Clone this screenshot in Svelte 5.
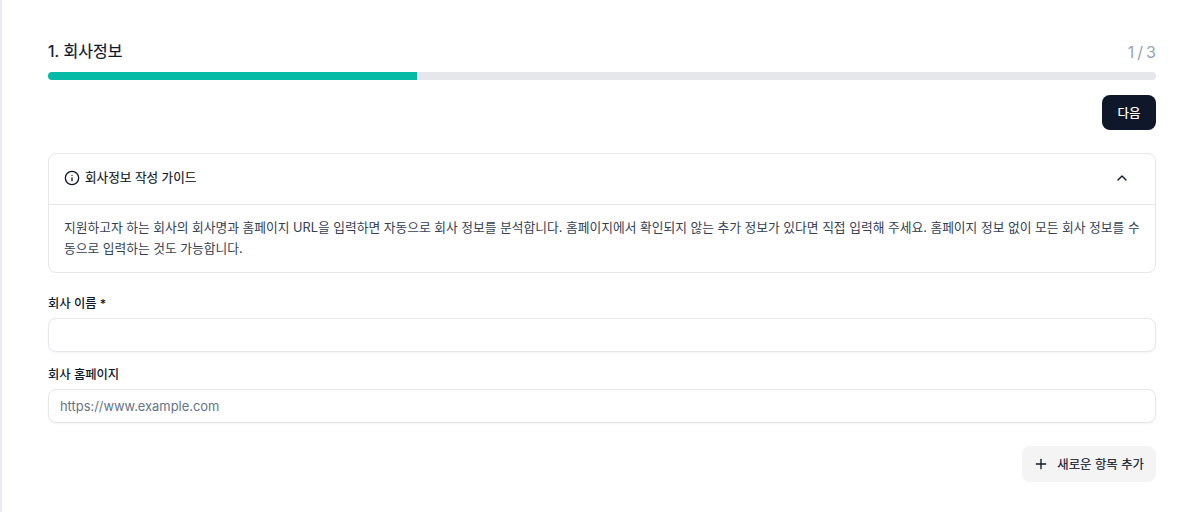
<script>
	let open = $state(true);
	let name = $state('');
	let homepage = $state('');
	const step = 1;
	const total = 3;
</script>

<div class="page">
	<main class="content">
		<header class="step-head">
			<h2>{step}. 회사정보</h2>
			<span class="count">{step} / {total}</span>
		</header>
		<div class="progress"><div class="bar" style="width: {(step / total) * 100}%"></div></div>

		<div class="actions">
			<button class="next" type="button">다음</button>
		</div>

		<section class="guide">
			<button class="guide-head" type="button" onclick={() => (open = !open)}>
				<span class="guide-title">
					<svg width="16" height="16" viewBox="0 0 24 24" fill="none" stroke="currentColor" stroke-width="2" stroke-linecap="round" stroke-linejoin="round">
						<circle cx="12" cy="12" r="10" />
						<path d="M12 16v-4" />
						<path d="M12 8h.01" />
					</svg>
					회사정보 작성 가이드
				</span>
				<svg width="16" height="16" viewBox="0 0 24 24" fill="none" stroke="currentColor" stroke-width="2" stroke-linecap="round" stroke-linejoin="round">
					<path d="m18 15-6-6-6 6" />
				</svg>
			</button>
			{#if open}
				<p class="guide-body">지원하고자 하는 회사의 회사명과 홈페이지 URL을 입력하면 자동으로 회사 정보를 분석합니다. 홈페이지에서 확인되지 않는 추가 정보가 있다면 직접 입력해 주세요. 홈페이지 정보 없이 모든 회사 정보를 수동으로 입력하는 것도 가능합니다.</p>
			{/if}
		</section>

		<div class="field first">
			<label for="company">회사 이름 *</label>
			<input id="company" type="text" bind:value={name} />
		</div>
		<div class="field">
			<label for="homepage">회사 홈페이지</label>
			<input id="homepage" type="text" placeholder="https://www.example.com" bind:value={homepage} />
		</div>

		<div class="add-row">
			<button class="add" type="button">
				<svg width="16" height="16" viewBox="0 0 24 24" fill="none" stroke="currentColor" stroke-width="2" stroke-linecap="round" stroke-linejoin="round">
					<path d="M5 12h14" />
					<path d="M12 5v14" />
				</svg>
				새로운 항목 추가
			</button>
		</div>
	</main>
</div>

<style>
	:global(body) {
		margin: 0;
		background: #fff;
	}

	.page {
		height: 512px;
		box-sizing: border-box;
		border-left: 2px solid #e8eaf8;
		overflow: hidden;
		font-family: Inter, "Noto Sans CJK KR", sans-serif;
		color: #0f172a;
	}

	.content {
		padding: 40px 44px 0 46px;
	}

	.step-head {
		display: flex;
		justify-content: space-between;
		align-items: center;
		height: 24px;
		margin-bottom: 8px;
	}

	h2 {
		margin: 0 0 2px;
		font-size: 16px;
		font-weight: 400;
		line-height: 24px;
		color: #0f172a;
		-webkit-text-stroke: 0.2px #0f172a;
	}

	.count {
		font-size: 16px;
		line-height: 24px;
		word-spacing: -1.5px;
		color: #94a3b8;
	}

	.progress {
		height: 8px;
		background: #e5e7eb;
		border-radius: 999px;
		overflow: hidden;
	}

	.bar {
		height: 100%;
		background: #06bba5;
	}

	.actions {
		display: flex;
		justify-content: flex-end;
		margin-top: 15px;
	}

	.next {
		height: 35px;
		width: 54px;
		padding: 0;
		border: 0;
		border-radius: 8px;
		background: #0f172a;
		color: #fff;
		font: inherit;
		font-size: 12.5px;
		font-weight: 500;
	}

	.guide {
		margin-top: 23px;
		border: 1px solid #e5e7eb;
		border-radius: 8px;
	}

	.guide-head {
		display: flex;
		align-items: center;
		justify-content: space-between;
		width: 100%;
		height: 51px;
		padding: 0 25px 2px 15px;
		border: 0;
		border-bottom: 1px solid #e5e7eb;
		background: none;
		color: #0f172a;
		font: inherit;
	}

	.guide-title {
		display: flex;
		align-items: center;
		gap: 5px;
		font-size: 12.6px;
		font-weight: 400;
		line-height: 16px;
		-webkit-text-stroke: 0.15px #0f172a;
	}

	.guide-body {
		margin: 0;
		padding: 13px 15px 13px;
		font-size: 12.75px;
		line-height: 20.5px;
		color: #334155;
	}

	.field {
		margin-top: 12px;
	}

	.field.first {
		margin-top: 20px;
	}

	label {
		display: block;
		height: 20px;
		margin-bottom: 5px;
		font-size: 12.3px;
		font-weight: 500;
		line-height: 21px;
	}

	input {
		display: block;
		width: 100%;
		height: 34px;
		box-sizing: border-box;
		padding: 0 11px;
		border: 1px solid #e5e7eb;
		border-radius: 8px;
		box-shadow: 0 1px 2px rgba(0, 0, 0, 0.05);
		font: inherit;
		font-size: 12.9px;
		color: #0f172a;
		outline: none;
	}

	input::placeholder {
		color: #64748b;
	}

	.add-row {
		display: flex;
		justify-content: flex-end;
		margin-top: 23px;
	}

	.add {
		display: flex;
		align-items: center;
		gap: 8px;
		height: 36px;
		padding: 0 12px 0 11px;
		border: 0;
		border-radius: 8px;
		background: #f4f4f5;
		color: #0f172a;
		font: inherit;
		font-size: 12.4px;
		font-weight: 400;
		-webkit-text-stroke: 0.15px #0f172a;
	}
</style>
